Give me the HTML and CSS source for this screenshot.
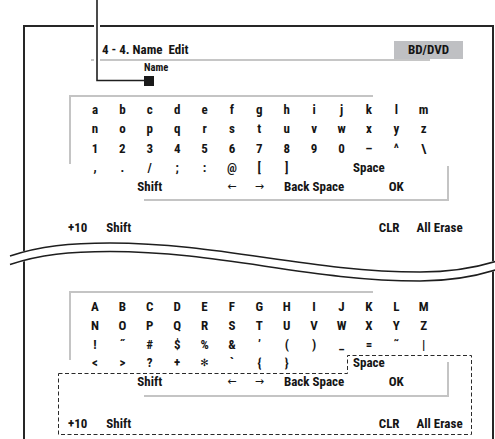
FILE: index.html
```html
<!DOCTYPE html>
<html lang="en">
<head>
  <meta charset="UTF-8" />
  <title>4-4. Name Edit</title>
  <link rel="stylesheet" href="styles.css">
</head>
<body>
  <div class="page">
    <div class="frame">
      <!-- lower-case page -->
      <section class="screen">
        <div class="head">
          <span class="title">4 - 4. Name&nbsp; Edit</span>
          <span class="badge">BD/DVD</span>
        </div>
        <div class="name">
          <span class="label">Name</span>
          <span class="cursor"></span>
        </div>
        <div class="keyboard">
          <div class="keys">
            <span>a</span><span>b</span><span>c</span><span>d</span><span>e</span><span>f</span><span>g</span><span>h</span><span>i</span><span>j</span><span>k</span><span>l</span><span>m</span>
            <span>n</span><span>o</span><span>p</span><span>q</span><span>r</span><span>s</span><span>t</span><span>u</span><span>v</span><span>w</span><span>x</span><span>y</span><span>z</span>
            <span>1</span><span>2</span><span>3</span><span>4</span><span>5</span><span>6</span><span>7</span><span>8</span><span>9</span><span>0</span><span>–</span><span>^</span><span>\</span>
            <span>,</span><span>.</span><span>/</span><span>;</span><span>:</span><span>@</span><span>[</span><span>]</span><span class="space">Space</span>
            <span class="shift">Shift</span><span class="arrow left">←</span><span class="arrow">→</span><span class="bs">Back Space</span><span class="ok">OK</span>
          </div>
        </div>
        <div class="actions">
          <span>+10</span>
          <span class="gap">Shift</span>
          <span class="push">CLR</span>
          <span class="gap2">All Erase</span>
        </div>
      </section>

      <!-- upper-case page -->
      <section class="screen lower">
        <div class="keyboard">
          <div class="keys">
            <span>A</span><span>B</span><span>C</span><span>D</span><span>E</span><span>F</span><span>G</span><span>H</span><span>I</span><span>J</span><span>K</span><span>L</span><span>M</span>
            <span>N</span><span>O</span><span>P</span><span>Q</span><span>R</span><span>S</span><span>T</span><span>U</span><span>V</span><span>W</span><span>X</span><span>Y</span><span>Z</span>
            <span>!</span><span>˝</span><span>#</span><span>$</span><span>%</span><span>&amp;</span><span>’</span><span>(</span><span>)</span><span>_</span><span>=</span><span>˜</span><span>|</span>
            <span>&lt;</span><span>&gt;</span><span>?</span><span>+</span><span class="star">✻</span><span>`</span><span>{</span><span>}</span><span class="space">Space</span>
            <span class="shift">Shift</span><span class="arrow left">←</span><span class="arrow">→</span><span class="bs">Back Space</span><span class="ok">OK</span>
          </div>
        </div>
        <div class="actions">
          <span>+10</span>
          <span class="gap">Shift</span>
          <span class="push">CLR</span>
          <span class="gap2">All Erase</span>
        </div>
      </section>
    </div>

    <svg class="overlay" width="495" height="439" viewBox="0 0 495 439">
      <!-- callout to the name cursor -->
      <path d="M97 0V80.5H144" fill="none" stroke="#fff" stroke-width="6"/>
      <path d="M97 0V80.5H144" fill="none" stroke="#1e1e1e" stroke-width="1.6"/>
      <!-- page break -->
      <path d="M10 260.2C40 250.2 70 247.2 110 247.2C220 247.2 310 276.2 420 276.2C450 276.2 475 272.2 497 265.2" fill="none" stroke="#fff" stroke-width="10"/>
      <path d="M10 256C40 246 70 243 110 243C220 243 310 272 420 272C450 272 475 268 497 261" fill="none" stroke="#1e1e1e" stroke-width="1.5"/>
      <path d="M10 264.5C40 254.5 70 251.5 110 251.5C220 251.5 310 281 420 281C450 281 475 276.5 497 269.5" fill="none" stroke="#1e1e1e" stroke-width="1.5"/>
      <!-- highlighted keys -->
      <path d="M58.5 373.5H347.5V355.5H471.5V434.5H58.5Z" fill="none" stroke="#2a2a2a" stroke-width="1" stroke-dasharray="4 2.5"/>
    </svg>
  </div>
</body>
</html>
```

FILE: styles.css
```css
body {
  margin: 0;
  background: #fff;
  color: #151515;
  font-family: "Roboto Condensed", "Liberation Sans Narrow", "DejaVu Sans Condensed", sans-serif;
  font-weight: bold;
}

.page {
  position: relative;
  width: 495px;
  height: 439px;
  overflow: hidden;
}

.frame {
  margin: 25px 0 0 23px;
  width: 471px;
  height: 430px;
  box-sizing: border-box;
  border: 2px solid #262626;
  border-bottom: none;
}

.screen {
  padding-top: 14px;
}

.head {
  display: flex;
  height: 18px;
  width: 339px;
  margin-left: 66px;
  border-bottom: 2px solid #c6c6c6;
  font-size: 13px;
  line-height: 18px;
}

.title {
  padding-left: 11px;
}

.badge {
  width: 69px;
  margin-left: auto;
  margin-right: -33px;
  background: #bfc0c3;
  text-align: center;
}

.name {
  margin: 1px 0 0 119px;
}

.label {
  display: block;
  font-size: 10.5px;
  line-height: 12px;
}

.cursor {
  display: block;
  width: 10px;
  height: 10px;
  margin-top: 2px;
  background: #1a1a1a;
}

.keyboard {
  position: relative;
  width: 380px;
  height: 106px;
  box-sizing: border-box;
  margin: 9px 0 0 44px;
  padding: 5px 0 0 12.3px;
}

.keyboard::before,
.keyboard::after {
  content: "";
  position: absolute;
  box-sizing: border-box;
  border: 0 solid #c4c4c4;
}

.keyboard::before {
  left: 0;
  top: 0;
  width: 304px;
  height: 69px;
  border-top-width: 2px;
  border-left-width: 2px;
}

.keyboard::after {
  right: 0;
  bottom: 0;
  width: 305px;
  height: 35px;
  border-right-width: 2px;
  border-bottom-width: 2px;
}

.keys {
  display: grid;
  grid-template-columns: repeat(13, 27.4px);
  grid-auto-rows: 19.25px;
  font-size: 13px;
  line-height: 19.25px;
  text-align: center;
  white-space: nowrap;
}

.keys .space { grid-column: 10 / 13; }
.keys .shift { grid-column: 2 / 5; }
.keys .left { grid-column: 6; }
.keys .bs { grid-column: 8 / 11; }
.keys .ok { grid-column: 12; }

.keys .arrow {
  font-weight: normal;
  font-family: "DejaVu Sans", sans-serif;
  font-size: 11px;
}

.keys .star {
  font-weight: normal;
  font-family: "DejaVu Sans", sans-serif;
  font-size: 10px;
}

.actions {
  display: flex;
  margin-top: 17px;
  padding: 0 29.4px 0 43px;
  font-size: 13px;
  line-height: 19.25px;
  white-space: nowrap;
}

.actions .gap { margin-left: 19px; }
.actions .push { margin-left: auto; }
.actions .gap2 { margin-left: 17px; }

.lower {
  margin-top: 53.75px;
  padding-top: 0;
}

.lower .keyboard {
  padding-top: 7px;
}

.lower .keys {
  grid-auto-rows: 18.8px;
  line-height: 18.8px;
}

.overlay {
  position: absolute;
  left: 0;
  top: 0;
  pointer-events: none;
}
```
